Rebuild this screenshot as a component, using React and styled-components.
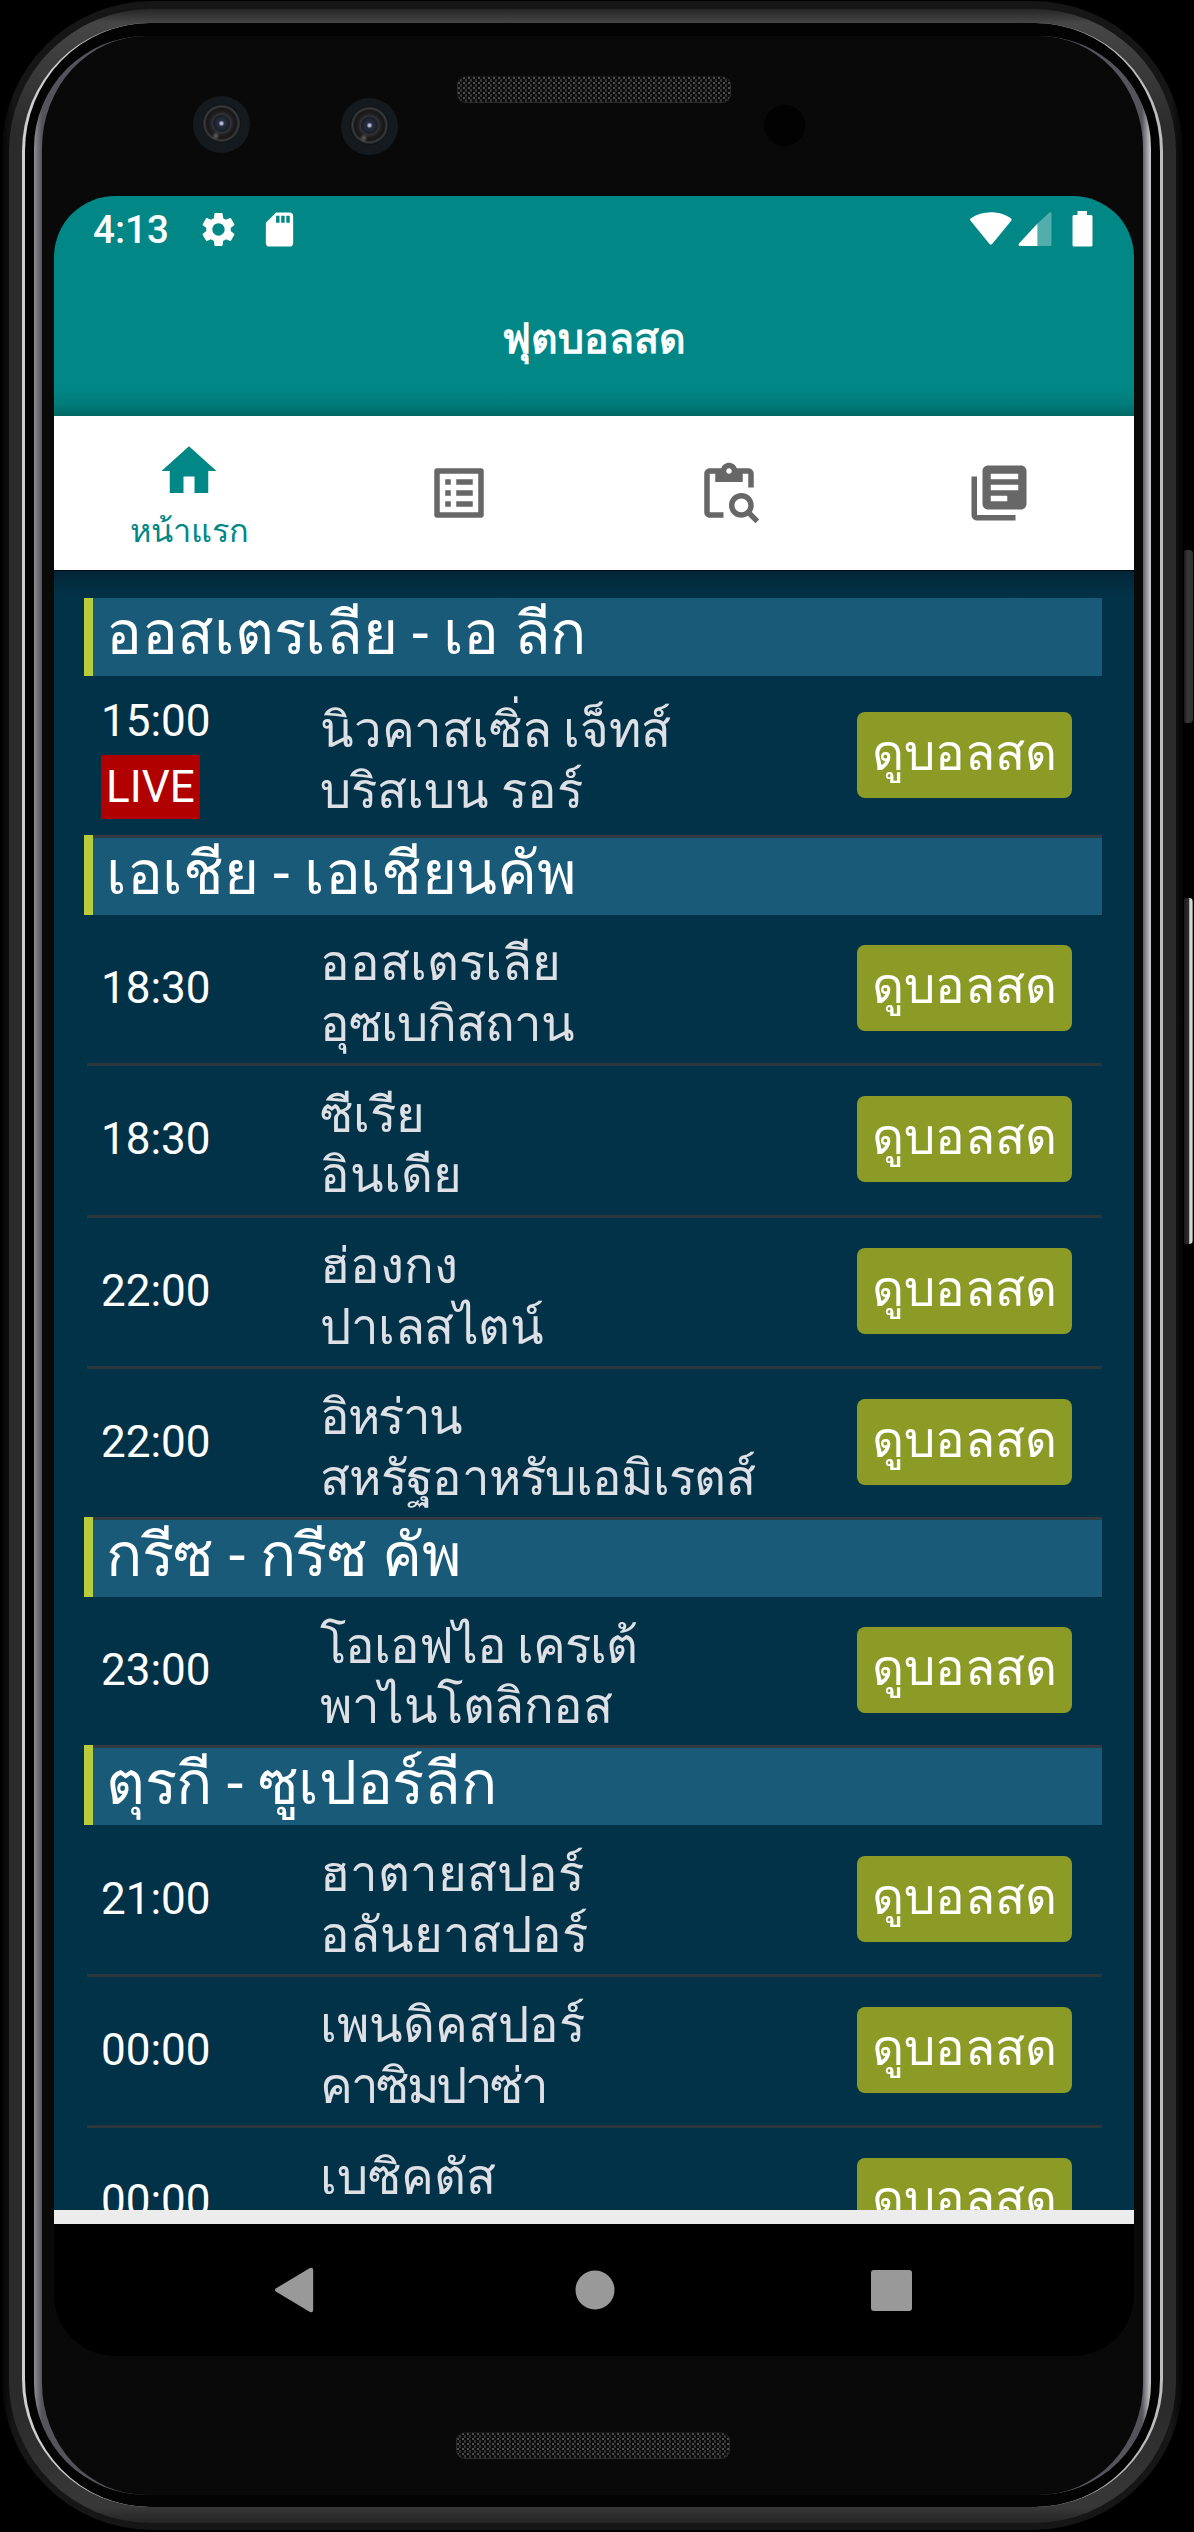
import React from 'react';
import styled, { createGlobalStyle } from 'styled-components';
import {
  MdHome,
  MdListAlt,
  MdContentPasteSearch,
  MdLibraryBooks,
  MdSettings,
  MdSdCard,
} from 'react-icons/md';

const GlobalStyle = createGlobalStyle`
  * {
    box-sizing: border-box;
  }
  body {
    margin: 0;
    background: #000;
    font-family: Roboto, 'Droid Sans Thai', sans-serif;
    -webkit-font-smoothing: antialiased;
  }
  p, h1, h2 {
    margin: 0;
    font-weight: 400;
  }
`;

/*---------- phone ----------*/
const Stage = styled.div`
  position: relative;
  width: 1194px;
  height: 2532px;
  padding: 1px 0 0 2px;
  overflow: hidden;
  background: #000;
`;

const Body = styled.div`
  width: 1181px;
  height: 2529px;
  padding: 8px 7px 7px;
  border-radius: 150px;
  background: linear-gradient(90deg, #050505, #161616 1%, #161616 99%, #050505);
`;

const Rim = styled.div`
  height: 2514px;
  padding: 14px 13px 16px;
  border-radius: 142px;
  background: linear-gradient(
    180deg,
    #262626,
    #464646 14px,
    #2b2b2b 120px,
    #2b2b2b 2400px,
    #383838 2498px,
    #242424
  );
`;

const Edge = styled.div`
  height: 2484px;
  padding: 13px 9px 12px;
  border-style: solid;
  border-color: #555 #bdbdbd #555 #cfcfcf;
  border-width: 0 3px;
  border-radius: 128px;
  background: #030303;
`;

const Glass = styled.div`
  height: 2459px;
  border-style: solid;
  border-color: transparent;
  border-width: 0 8px;
  border-radius: 112px;
  padding: 0 12px;
  background: linear-gradient(#090909, #090909) padding-box,
    linear-gradient(
        90deg,
        #8d8d92,
        #55545c 8px,
        #55545c 1108px,
        #c4c4c6 1116px
      )
      border-box;
`;

const TopBezel = styled.div`
  height: 160px;
  display: flex;
  align-items: flex-start;
  padding-left: 139px;
`;

const BottomBezel = styled.div`
  display: flex;
  justify-content: center;
  padding-top: 76px;
`;

const Camera = styled.div`
  width: 57px;
  height: 57px;
  margin-top: ${({ $top }) => $top}px;
  margin-right: ${({ $gap }) => $gap}px;
  border-radius: 50%;
  background: radial-gradient(
      circle at 40% 70%,
      rgba(150, 145, 140, 0.6),
      transparent 4px
    ),
    radial-gradient(
      circle at 50% 48%,
      #b9bfe0 0 1px,
      #2a2e42 3px,
      #1c1e26 8px,
      #333338 9px,
      #1e1e20 12px,
      #18181a 15px,
      #3c3c3f 17px,
      #101416 19px,
      #141a1e 20px
    );
`;

const Sensor = styled.div`
  width: 41px;
  height: 41px;
  margin: 69px 0 0 33px;
  border-radius: 50%;
  background: #020203;
`;

const Speaker = styled.div`
  width: 274px;
  height: 27px;
  margin-top: ${({ $top }) => $top}px;
  border-radius: 9px;
  border: 1px solid #2c2c2c;
  border-top-color: #181818;
  background: radial-gradient(circle at 1px 1px, #4e4e4e 1px, transparent 1.5px)
      0 0 / 5px 5px,
    radial-gradient(circle at 3px 3.5px, #3a3a3a 1px, transparent 1.5px) 0 0 /
      5px 5px,
    #0d0d0d;
`;

const SideKey = styled.div`
  position: absolute;
  left: 1184px;
  top: ${({ $top }) => $top}px;
  width: 9px;
  height: ${({ $height }) => $height}px;
  border-radius: 2px 4px 4px 2px;
  background: ${({ $shiny }) =>
    $shiny
      ? 'linear-gradient(90deg, #1c1c1c, #2e2e2e 50%, #d6d6d6 65%, #d6d6d6 85%, #555)'
      : 'linear-gradient(90deg, #1a1a1a, #383838 40%, #2f2f2f)'};
`;

/*---------- screen ----------*/
const Screen = styled.div`
  width: 1080px;
  height: 2160px;
  display: flex;
  flex-direction: column;
  overflow: hidden;
  border-radius: 61px;
  background: #000;
`;

const Header = styled.header`
  height: 220px;
  flex: none;
  color: #fff;
  background: linear-gradient(#018786 0 192px, #017c7a 208px, #016865);
`;

const StatusBar = styled.div`
  height: 66px;
  padding: 0 41px 0 39px;
  display: flex;
  align-items: center;
  justify-content: space-between;

  .left,
  .right {
    display: flex;
    align-items: center;
  }
  .right {
    padding-top: 3px;
  }

  .clock {
    width: 105px;
    font-size: 38.5px;
    font-weight: 500;
    line-height: 66px;
    padding-top: 2px;
  }

  svg {
    display: block;
  }
  .sd {
    margin-left: 20px;
  }
`;

const Title = styled.h1`
  padding-top: 47px;
  text-align: center;
  font-size: 41px;
  font-weight: 700;
  line-height: 60px;
`;

const Tabs = styled.nav`
  height: 155px;
  flex: none;
  display: flex;
  background: #fff;
  border-bottom: 1px solid #000c12;
`;

const Tab = styled.div`
  flex: 1;
  display: flex;
  flex-direction: column;
  align-items: center;
  justify-content: center;
  color: ${({ $active }) => ($active ? '#018786' : '#676767')};

  svg {
    display: block;
    flex: none;
  }
  p {
    height: 44px;
    font-size: 32.5px;
    line-height: 55px;
  }
`;

const Content = styled.main`
  height: 1639px;
  flex: none;
  overflow: hidden;
  padding: 27px 32px 0 30px;
  background: linear-gradient(#022636, #023248 26px);
`;

const League = styled.h2`
  height: ${({ $first }) => ($first ? 78 : 80)}px;
  border-left: 9px solid #b8cc3c;
  background: #185a78;
  color: #fff;

  p {
    height: 100%;
    padding-left: 13px;
    border-top: ${({ $first }) => ($first ? 0 : 3)}px solid #333b42;
    font-size: 60px;
    line-height: 72px;
    letter-spacing: -0.3px;
    white-space: nowrap;
  }
`;

const Match = styled.div`
  height: ${({ $live }) => ($live ? 159 : 148.3)}px;
  margin-left: 3px;
  display: flex;
  align-items: center;
  padding: 0 30px 0 14px;
  box-sizing: content-box;
  width: 971px;
  border-bottom: ${({ $last }) => ($last ? 0 : 3)}px solid #2b363d;

  .time {
    width: 219px;
    padding-bottom: 2px;
    color: #fff;
    font-size: 44px;
    line-height: 60px;
  }
  .live {
    display: table;
    height: 64px;
    margin-top: 4px;
    padding: 0 5px;
    line-height: 64px;
    background: #b00000;
  }
  .teams {
    flex: 1;
    padding-top: 10px;
  }
`;

const Team = styled.p`
  height: 60.7px;
  color: #dfe0e6;
  font-size: 49.2px;
  line-height: 60.7px;
  letter-spacing: ${({ $tracking }) => $tracking || 0}px;
  white-space: nowrap;
`;

const WatchButton = styled.button`
  width: 215px;
  height: 86px;
  margin-bottom: 2px;
  padding: 0 0 4px;
  border: none;
  border-radius: 8px;
  background: #8b9b25;
  color: #fff;
  font-family: inherit;
  font-size: 49.4px;
  line-height: 82px;
  white-space: nowrap;
`;

const Strip = styled.div`
  height: 14px;
  flex: none;
  background: #ececec;
`;

const NavBar = styled.div`
  height: 132px;
  display: flex;
  align-items: center;
  justify-content: space-between;
  padding: 0 222px 0 220px;
`;

const leagues = [
  {
    name: 'ออสเตรเลีย - เอ ลีก',
    matches: [
      { time: '15:00', live: true, home: 'นิวคาสเซิ่ล เจ็ทส์', away: 'บริสเบน รอร์' },
    ],
  },
  {
    name: 'เอเชีย - เอเชียนคัพ',
    matches: [
      { time: '18:30', home: 'ออสเตรเลีย', away: 'อุซเบกิสถาน' },
      { time: '18:30', home: 'ซีเรีย', away: 'อินเดีย' },
      { time: '22:00', home: 'ฮ่องกง', away: 'ปาเลสไตน์' },
      { time: '22:00', home: 'อิหร่าน', away: 'สหรัฐอาหรับเอมิเรตส์' },
    ],
  },
  {
    name: 'กรีซ - กรีซ คัพ',
    matches: [{ time: '23:00', home: 'โอเอฟไอ เครเต้', away: 'พาไนโตลิกอส' }],
  },
  {
    name: 'ตุรกี - ซูเปอร์ลีก',
    matches: [
      { time: '21:00', home: 'ฮาตายสปอร์', away: 'อลันยาสปอร์' },
      { time: '00:00', home: 'เพนดิคสปอร์', away: 'คาซิมปาซ่า' },
      { time: '00:00', home: 'เบซิคตัส', away: '' },
    ],
  },
];

const tracking = {
  'นิวคาสเซิ่ล เจ็ทส์': -0.2,
  อุซเบกิสถาน: -1,
  อิหร่าน: -1.8,
  ปาเลสไตน์: -0.5,
  สหรัฐอาหรับเอมิเรตส์: -0.7,
  'โอเอฟไอ เครเต้': -1,
  พาไนโตลิกอส: -0.5,
  คาซิมปาซ่า: -2.5,
};

const MatchRow = ({ match, last }) => (
  <Match $live={match.live} $last={last}>
    <div className="time">
      <p>{match.time}</p>
      {match.live && <p className="live">LIVE</p>}
    </div>
    <div className="teams">
      <Team $tracking={tracking[match.home]}>{match.home}</Team>
      <Team $tracking={tracking[match.away]}>{match.away}</Team>
    </div>
    <WatchButton>ดูบอลสด</WatchButton>
  </Match>
);

const StatusIcons = () => (
  <svg width="124" height="40" viewBox="0 0 124 40" fill="#fff">
    <path d="M1.6 9.8C0.8 9.2 0.8 8 1.6 7.4C13 -0.8 31 -0.8 42 7.4C42.8 8 42.8 9 42.2 9.8L23.4 32.8C22.5 33.9 21.2 33.9 20.3 32.8Z" />
    <path d="M51 35C49.6 35 49.2 33.600 50 32.600L68.500 12.500V35Z" />
    <path d="M68.500 12.500L80.400 1.600C81.200 0.800 82.500 1.200 82.500 2.400V33.500Q82.500 35 81 35H68.500Z" opacity="0.32" />
    <path d="M108.500 0H118V4H122Q123.500 4 123.500 5.500V34Q123.500 35.500 122 35.500H105Q103.500 35.500 103.500 34V5.500Q103.500 4 105 4H108.500Z" />
  </svg>
);

const App = () => {
  return (
    <Stage>
      <GlobalStyle />
      <Body>
        <Rim>
          <Edge>
            <Glass>
              <TopBezel>
                <Camera $top={60} $gap={91} />
                <Camera $top={62} $gap={59} />
                <Speaker $top={40} />
                <Sensor />
              </TopBezel>
              <Screen>
                <Header>
                  <StatusBar>
                    <div className="left">
                      <div className="clock">4:13</div>
                      <MdSettings size={41} />
                      <MdSdCard className="sd" size={41} />
                    </div>
                    <div className="right">
                      <StatusIcons />
                    </div>
                  </StatusBar>
                  <Title>ฟุตบอลสด</Title>
                </Header>
                <Tabs>
                  <Tab $active>
                    <MdHome size={66} />
                    <p>หน้าแรก</p>
                  </Tab>
                  <Tab>
                    <MdListAlt size={66} />
                  </Tab>
                  <Tab>
                    <MdContentPasteSearch size={66} />
                  </Tab>
                  <Tab>
                    <MdLibraryBooks size={66} />
                  </Tab>
                </Tabs>
                <Content>
                  {leagues.map((league, i) => (
                    <section key={league.name}>
                      <League $first={i === 0}>
                        <p>{league.name}</p>
                      </League>
                      {league.matches.map((match, j) => (
                        <MatchRow
                          key={match.home}
                          match={match}
                          last={j === league.matches.length - 1}
                        />
                      ))}
                    </section>
                  ))}
                </Content>
                <Strip />
                <NavBar>
                  <svg width="44" height="46" viewBox="0 0 44 46" fill="#999">
                    <path d="M2.200 21.200L35.500 1.200Q39 -0.400 39.200 3V43Q39 46.400 35.500 44.800L2.200 24.800Q-0.400 23 2.200 21.200Z" />
                  </svg>
                  <svg width="40" height="40" viewBox="0 0 40 40" fill="#999">
                    <circle cx="20" cy="20" r="19.500" />
                  </svg>
                  <svg width="41" height="41" viewBox="0 0 41 41" fill="#999">
                    <rect width="41" height="41" rx="3" />
                  </svg>
                </NavBar>
              </Screen>
              <BottomBezel>
                <Speaker $top={0} />
              </BottomBezel>
            </Glass>
          </Edge>
        </Rim>
      </Body>
      <SideKey $top={550} $height={173} />
      <SideKey $top={898} $height={346} $shiny />
    </Stage>
  );
};

export default App;
